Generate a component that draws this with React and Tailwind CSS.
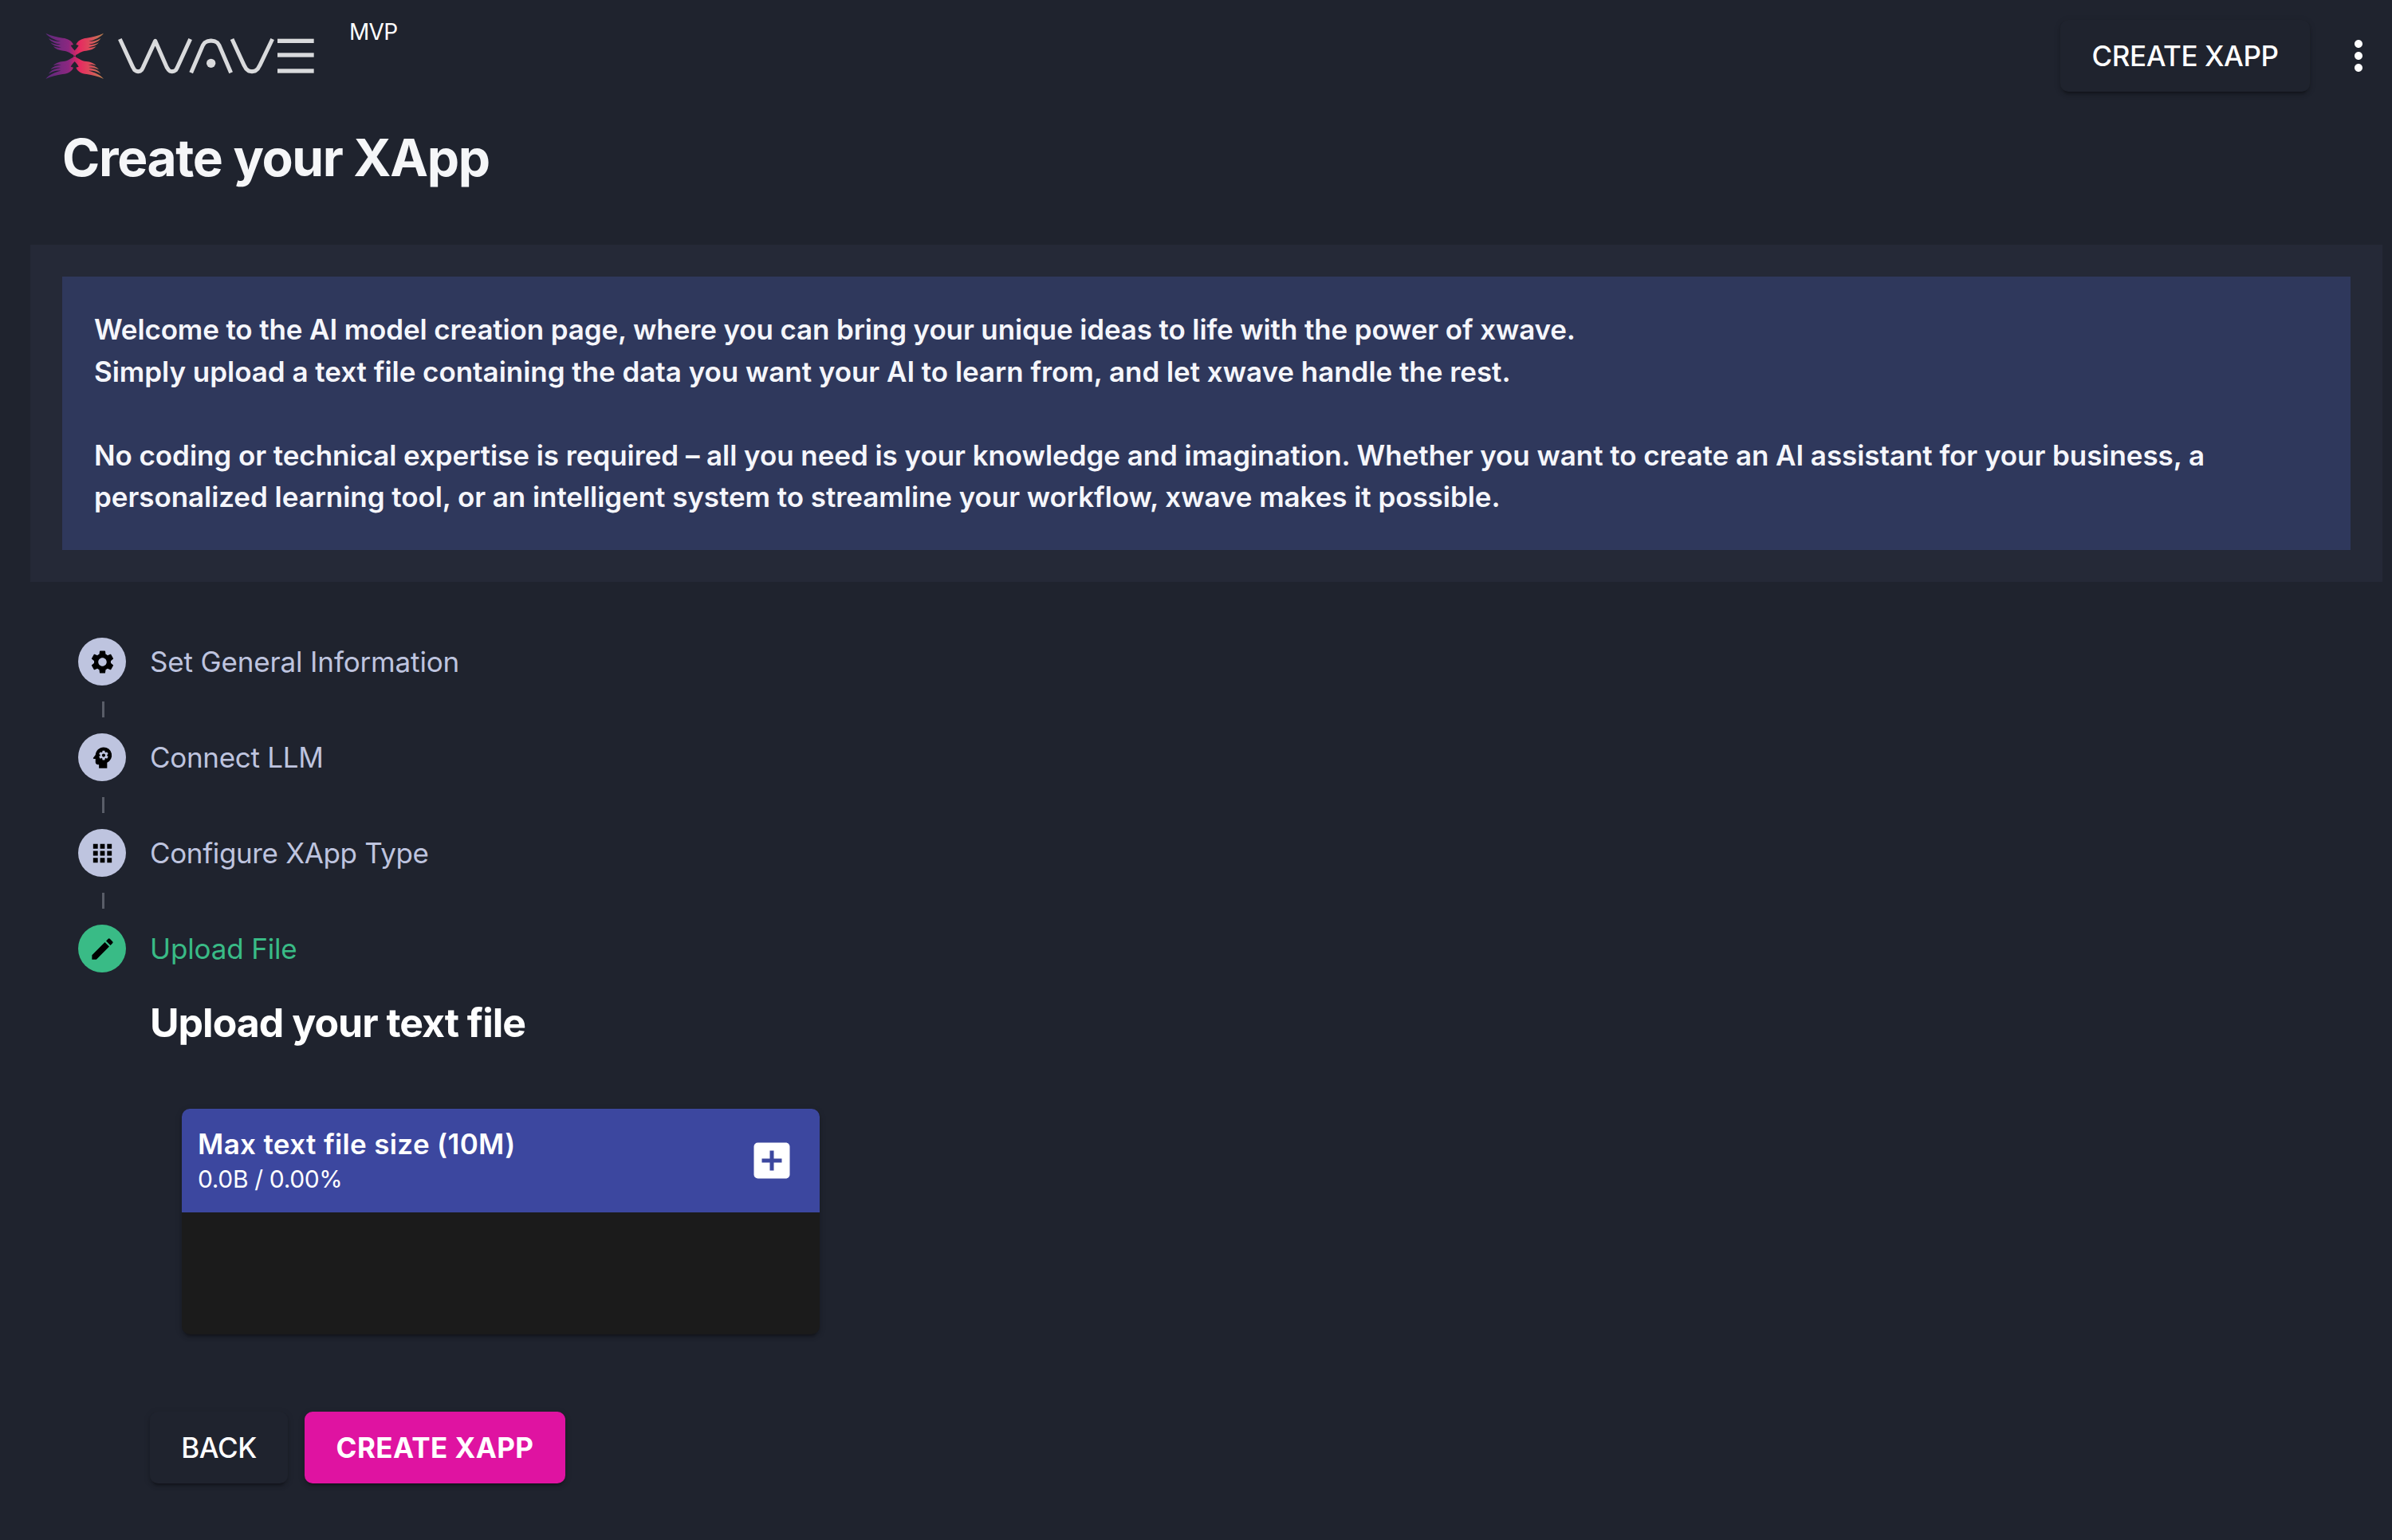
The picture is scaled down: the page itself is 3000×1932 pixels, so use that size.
import React from "react";
import {
  MdSettings,
  MdPsychology,
  MdApps,
  MdEdit,
  MdAddBox,
  MdMoreVert,
} from "react-icons/md";

// wizard steps
const steps = [
  { id: "general", name: "Set General Information", icon: <MdSettings size={35} /> },
  { id: "llm", name: "Connect LLM", icon: <MdPsychology size={35} />, tracking: "tracking-[-0.3px]" },
  { id: "type", name: "Configure XApp Type", icon: <MdApps size={35} />, tracking: "tracking-[-0.35px]" },
  { id: "upload", name: "Upload File", icon: <MdEdit size={35} />, active: true },
];

const raised =
  "shadow-[0_6px_2px_-4px_rgba(0,0,0,0.2),0_4px_4px_0_rgba(0,0,0,0.14),0_2px_10px_0_rgba(0,0,0,0.12)]";

const Logo = () => (
  <svg width="338" height="70" viewBox="51 48 1014 210" className="shrink-0 blur-[0.7px]">
    <defs>
      <linearGradient id="mark" gradientUnits="userSpaceOnUse" x1="22" y1="0" x2="238" y2="0">
        <stop offset="0" stopColor="#5a2a7c" />
        <stop offset="0.4" stopColor="#8c2780" />
        <stop offset="0.5" stopColor="#c0266c" />
        <stop offset="0.6" stopColor="#e62c60" />
        <stop offset="0.8" stopColor="#d9505a" />
        <stop offset="1" stopColor="#b9804f" />
      </linearGradient>
      <path
        id="wing"
        d="M135 111 C116 103 106 91 88 91 C72 90 58 84 50 75 C62 79 72 80 80 78 C64 76 48 71 40 60 C54 67 66 69 78 67 C58 64 40 57 33 44 C48 53 62 57 78 56 C56 50 34 41 22 25 C43 35 64 39 86 43 C106 45 121 54 126 68 L116 71 C122 81 128 88 135 94 Z"
      />
      <mask id="wings">
        <g fill="#fff">
          <use href="#wing" />
          <use href="#wing" transform="matrix(1 0 0 -1 0 222)" />
          <use href="#wing" transform="matrix(-1 0 0 1 262 0)" />
          <use href="#wing" transform="matrix(-1 0 0 -1 262 222)" />
        </g>
      </mask>
    </defs>
    <g transform="translate(30 43)">
      <rect x="18" y="10" width="230" height="205" fill="url(#mark)" mask="url(#wings)" />
    </g>
    <g fill="none" stroke="#d9dadc" strokeWidth="15" strokeLinejoin="round">
      <polyline points="331,90 380,196 386,206 393,211 400,212 407,211 413,206 418,197 464,97 508,197 514,206 520,211 527,212 535,211 542,206 547,197 596,90" />
      <polyline points="599,217 643,114 650,104 661,98 674,96 687,98 698,104 705,114 749,217" />
      <polyline points="753,90 799,190 806,202 816,210 828,212 840,210 850,202 857,190 905,90" />
    </g>
    <g fill="#d9dadc">
      <circle cx="674" cy="181" r="17" />
      <rect x="924" y="89" width="137" height="16" />
      <rect x="924" y="142" width="137" height="16" />
      <rect x="924" y="202" width="137" height="16" />
    </g>
  </svg>
);

const Header = () => (
  <header className="h-[140px] flex items-center pl-[57px] pr-3">
    <Logo />
    <span className="self-start mt-[19px] ml-[43px] text-[28px] leading-[42px] tracking-[-0.7px]">MVP</span>
    <div className="ml-auto flex items-center gap-[31px]">
      <button
        type="button"
        className={`w-[313px] h-[90px] rounded-[10px] bg-[#1f232e] font-medium tracking-[-0.45px] ${raised}`}
      >
        CREATE XAPP
      </button>
      <button type="button" aria-label="More options">
        <MdMoreVert size={60} />
      </button>
    </div>
  </header>
);

const Intro = () => (
  <section className="ml-[38px] mr-3 p-10 bg-[#252937]">
    <div className="p-10 bg-[#2f385c] text-[#f5f6fb] font-semibold leading-[52.5px]">
      <p className="tracking-[-0.13px]">
        Welcome to the AI model creation page, where you can bring your unique ideas to life with the power of xwave.
      </p>
      <p className="tracking-[-0.04px]">
        Simply upload a text file containing the data you want your AI to learn from, and let xwave handle the rest.
      </p>
      <br />
      <p className="tracking-[-0.06px]">
        No coding or technical expertise is required – all you need is your knowledge and imagination. Whether you want to create an AI assistant for your business, a
        <br />
        personalized learning tool, or an intelligent system to streamline your workflow, xwave makes it possible.
      </p>
    </div>
  </section>
);

const Stepper = () => (
  <div className="flex flex-col pl-[98px] mt-[70.5px] tracking-[-0.15px]">
    {steps.map((step, index) => (
      <React.Fragment key={step.id}>
        {index > 0 && <div className="w-[3px] h-5 my-5 ml-[30px] bg-[#595d68]"></div>}
        <div className="flex items-center gap-[30px]">
          <div
            className={`w-[60px] h-[60px] rounded-full flex items-center justify-center text-black ${
              step.active ? "bg-[#39bb86]" : "bg-[#bec4df]"
            }`}
          >
            {step.icon}
          </div>
          <span className={`${step.active ? "text-[#39bb86]" : "text-[#bec4df]"} ${step.tracking || ""}`}>
            {step.name}
          </span>
        </div>
      </React.Fragment>
    ))}
  </div>
);

const UploadCard = () => (
  <div className={`w-[800px] ml-10 mt-[70px] rounded-[10px] overflow-hidden bg-[#1b1b1b] ${raised}`}>
    <div className="h-[130px] flex items-center justify-between pl-5 pr-[30px] bg-[#3c479f]">
      <div className="flex flex-col">
        <span className="font-semibold tracking-[0.35px] leading-[46px]">Max text file size (10M)</span>
        <span className="text-[30px] tracking-[-0.35px] leading-[43px]">0.0B / 0.00%</span>
      </div>
      <MdAddBox size={60} />
    </div>
    <div className="h-[153px]"></div>
  </div>
);

export default function App() {
  return (
    <div className="min-h-screen bg-[#1f232e] text-white text-[35px] font-['Inter',sans-serif]">
      <Header />
      <h1 className="pl-[78px] mt-[18px] mb-[69px] text-[64px] leading-[80px] font-bold tracking-[-1.35px] text-[#f5f6f8]">
        Create your XApp
      </h1>
      <Intro />
      <Stepper />
      <main className="pl-[188px]">
        <h2 className="mt-[26px] text-[50px] leading-[75px] font-bold tracking-[-1px]">Upload your text file</h2>
        <UploadCard />
        <div className="flex gap-[21px] mt-[97px]">
          <button
            type="button"
            className={`w-[173px] h-[90px] rounded-[10px] font-medium tracking-[-0.4px] bg-[#1f232e] ${raised}`}
          >
            BACK
          </button>
          <button
            type="button"
            className={`w-[327px] h-[90px] rounded-[10px] font-bold tracking-[0.4px] bg-[#df13a1] ${raised}`}
          >
            CREATE XAPP
          </button>
        </div>
      </main>
    </div>
  );
}
